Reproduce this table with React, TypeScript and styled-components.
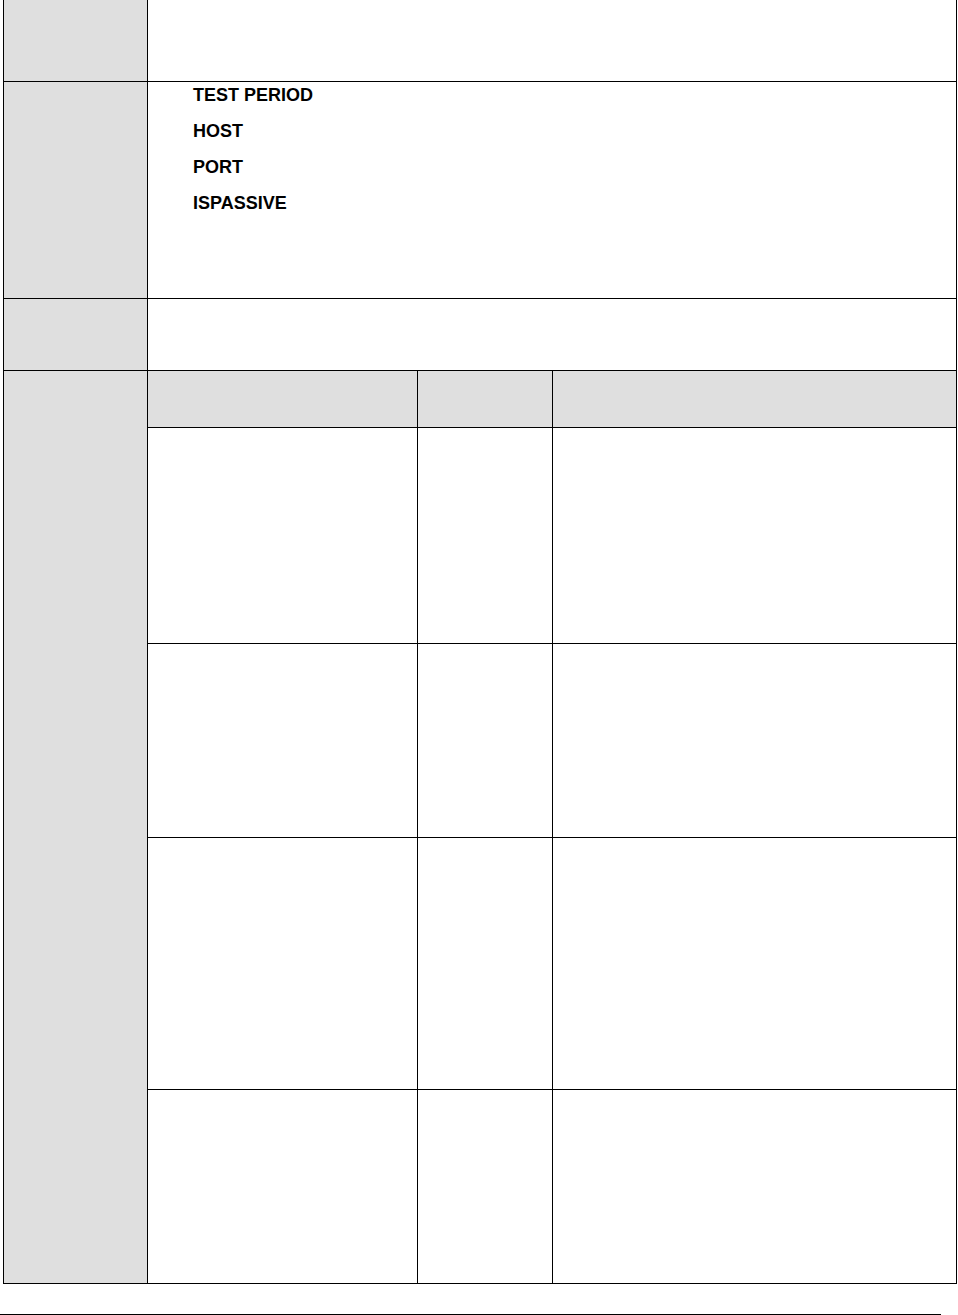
import React from "react";
import styled, { createGlobalStyle } from "styled-components";

const Global = createGlobalStyle`
  *, *::before, *::after { box-sizing: border-box; }
  html, body { margin: 0; padding: 0; background: #ffffff; }
  body { font-family: "Liberation Sans", Arial, sans-serif; color: #000; }
`;

const Page = styled.div`
  width: 958px;
  height: 1315px;
  display: flex;
  flex-direction: column;
  overflow: hidden;
`;

const Table = styled.div`
  margin-left: 3px;
  width: 954px;
  border-left: 1px solid #000;
  border-right: 1px solid #000;
  border-bottom: 1px solid #000;
  display: flex;
  flex-direction: column;
`;

const Row = styled.div<{ $h: number; $last?: boolean }>`
  display: grid;
  grid-template-columns: 144px 1fr;
  height: ${(p) => p.$h}px;
  border-bottom: ${(p) => (p.$last ? "none" : "1px solid #000")};
`;

const Label = styled.div`
  background: #dfdfdf;
  border-right: 1px solid #000;
`;

const Content = styled.div`
  background: #fff;
  min-width: 0;
`;

const ParamList = styled.ul`
  list-style: none;
  margin: 0;
  padding: 2px 0 0 45px;
  display: flex;
  flex-direction: column;
  gap: 14px;
`;

const Param = styled.li`
  font-weight: bold;
  font-size: 18px;
  line-height: 22px;
`;

const Inner = styled.div`
  display: grid;
  grid-template-columns: 270px 135px 1fr;
  grid-template-rows: 57px 216px 194px 252px 193px;
  height: 100%;
`;

const Cell = styled.div<{ $head?: boolean; $lastCol?: boolean; $lastRow?: boolean }>`
  background: ${(p) => (p.$head ? "#dfdfdf" : "#fff")};
  border-right: ${(p) => (p.$lastCol ? "none" : "1px solid #000")};
  border-bottom: ${(p) => (p.$lastRow ? "none" : "1px solid #000")};
`;

const Spacer = styled.div`
  height: 30px;
  flex: none;
`;

const Rule = styled.div`
  width: 941px;
  border-top: 1px solid #000;
`;

const rows = [false, false, false, false, true];

export default function App() {
  return (
    <>
      <Global />
      <Page>
        <Table>
          <Row $h={82}>
            <Label />
            <Content />
          </Row>
          <Row $h={217}>
            <Label />
            <Content>
              <ParamList>
                <Param>TEST PERIOD</Param>
                <Param>HOST</Param>
                <Param>PORT</Param>
                <Param>ISPASSIVE</Param>
              </ParamList>
            </Content>
          </Row>
          <Row $h={72}>
            <Label />
            <Content />
          </Row>
          <Row $h={912} $last>
            <Label />
            <Content>
              <Inner>
                {rows.map((last, i) =>
                  [0, 1, 2].map((c) => (
                    <Cell
                      key={`${i}-${c}`}
                      $head={i === 0}
                      $lastCol={c === 2}
                      $lastRow={last}
                    />
                  ))
                )}
              </Inner>
            </Content>
          </Row>
        </Table>
        <Spacer />
        <Rule />
      </Page>
    </>
  );
}
